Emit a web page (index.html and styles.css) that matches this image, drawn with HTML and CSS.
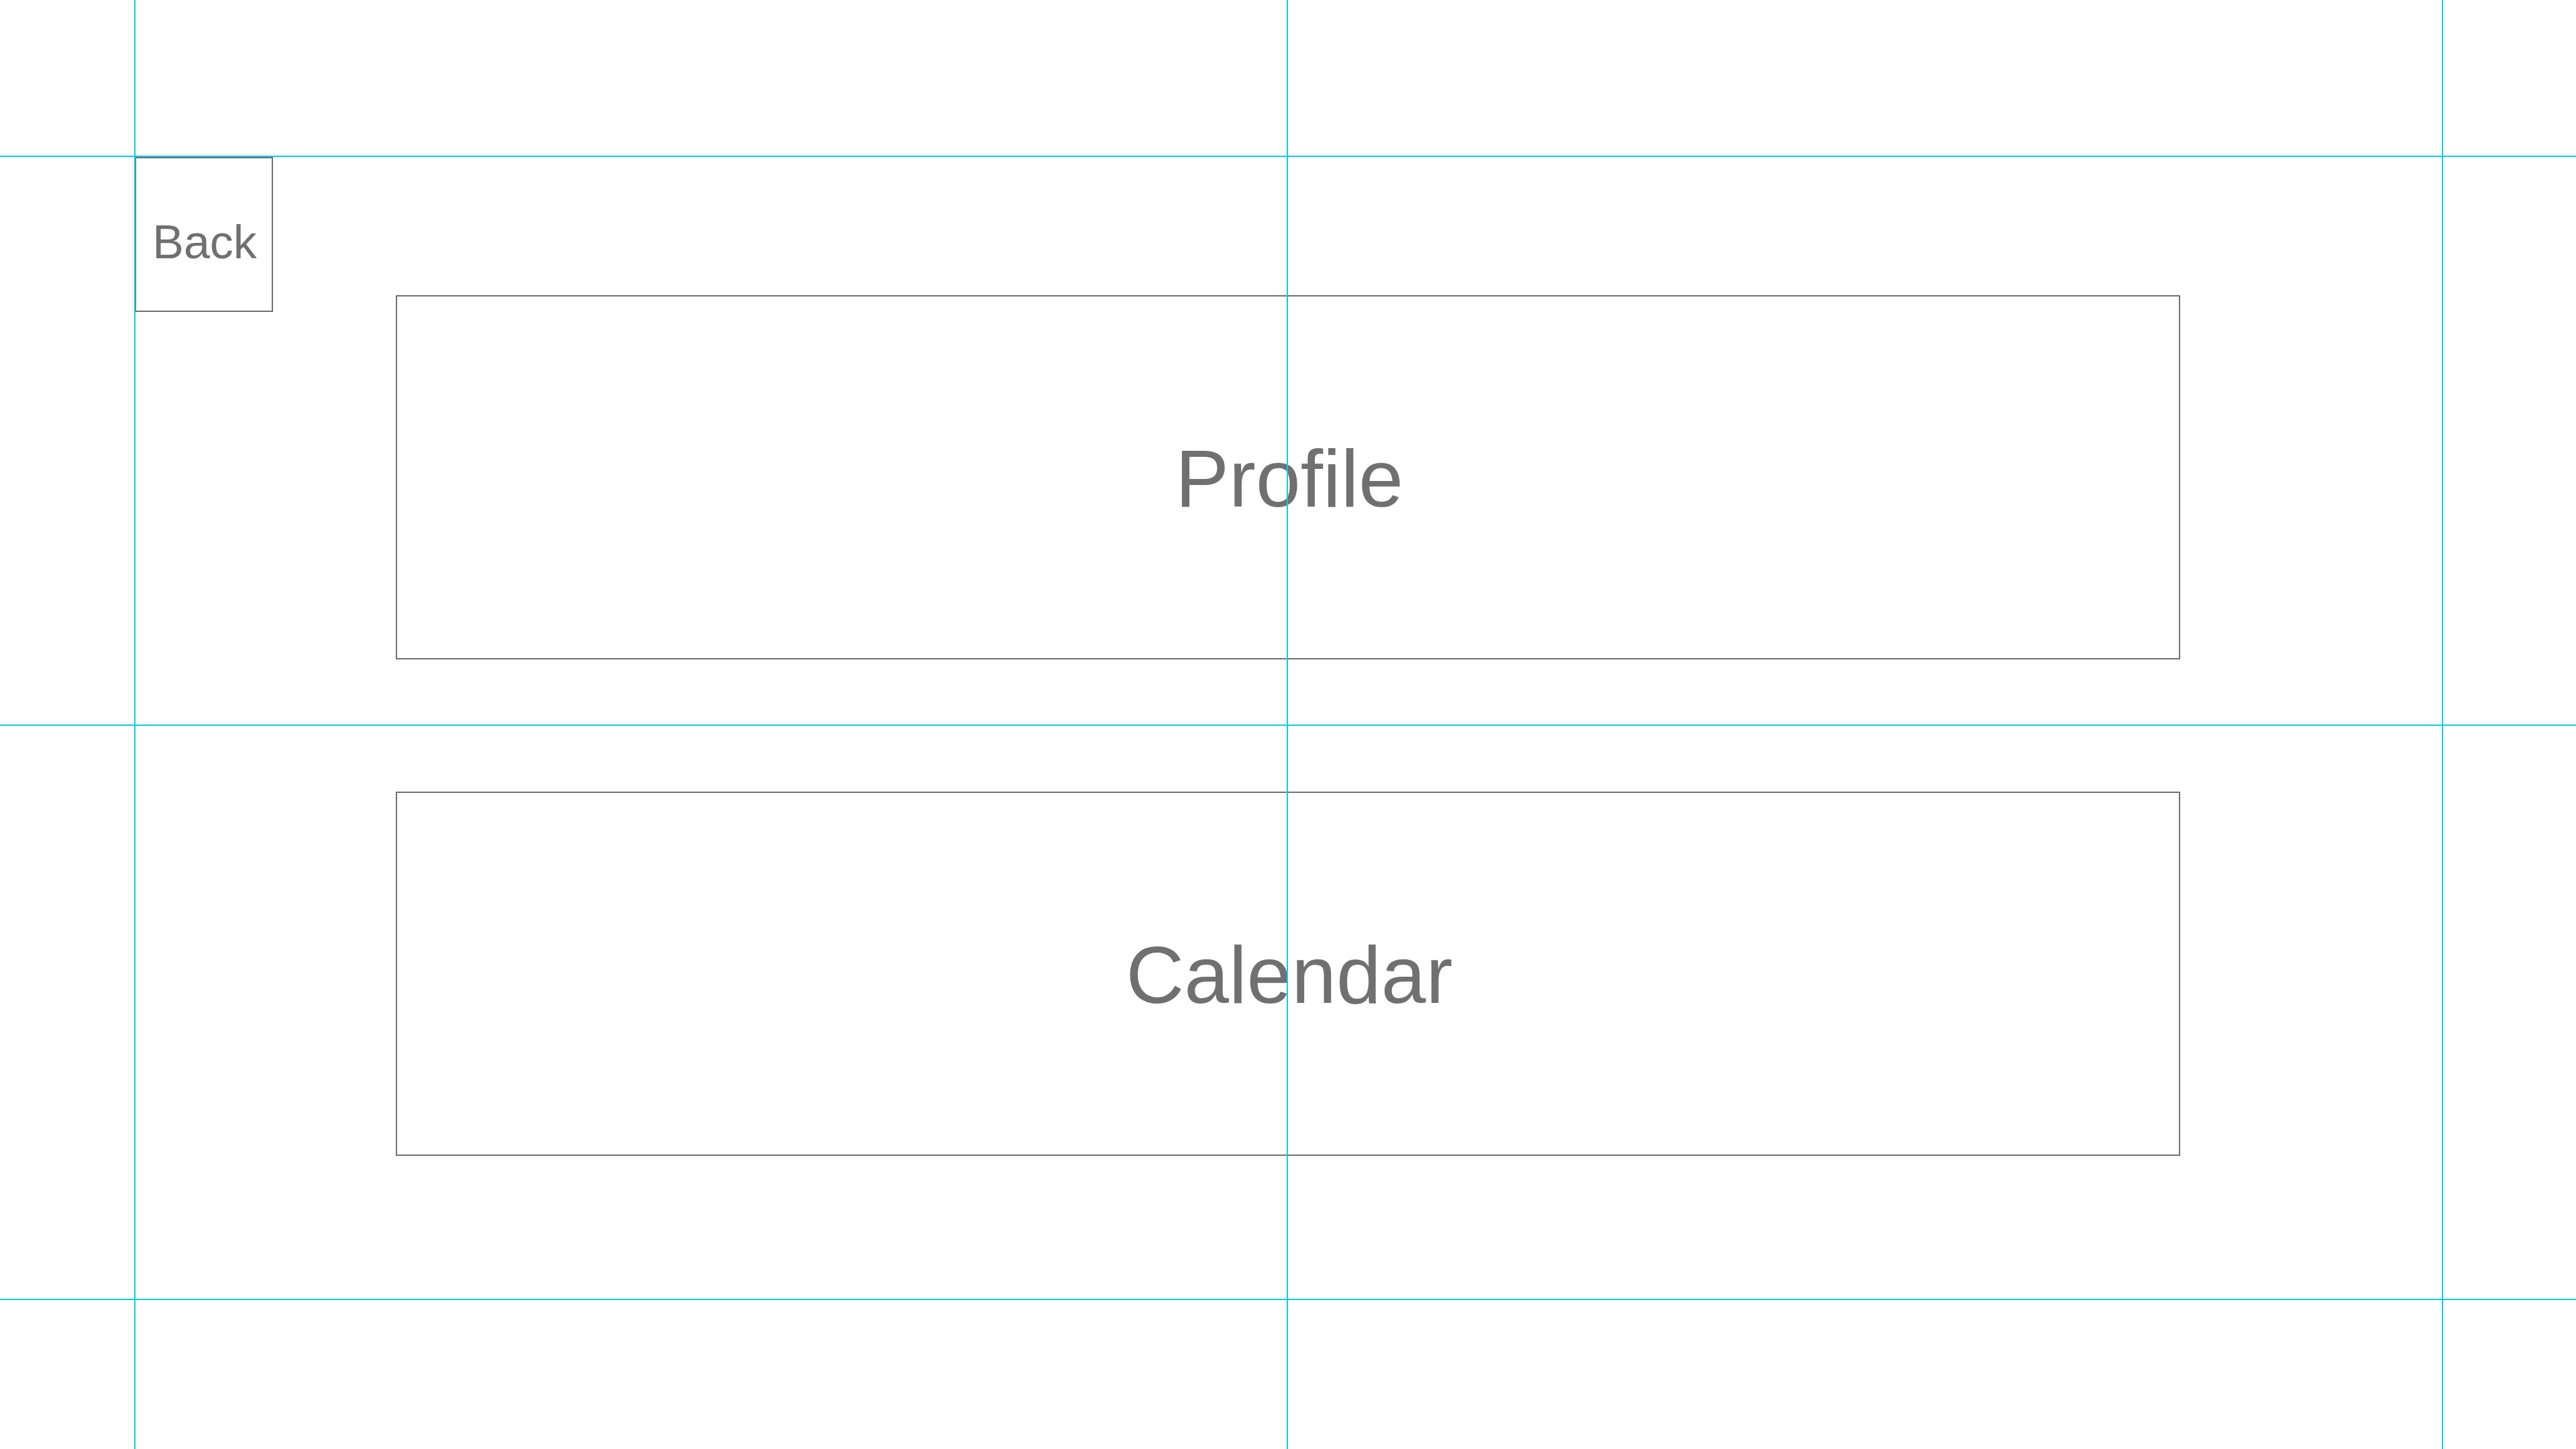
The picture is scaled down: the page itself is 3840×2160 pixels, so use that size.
FILE: index.html
```html
<!DOCTYPE html>
<html lang="en">
<head>
<meta charset="utf-8">
<title>Menu</title>
<link rel="stylesheet" href="styles.css">
</head>
<body>
<div class="page">
  <div class="layout">
    <button class="back">Back</button>
    <button class="card card-profile">Profile</button>
    <button class="card card-calendar">Calendar</button>
  </div>
  <div class="guide guide-v guide-v1"></div>
  <div class="guide guide-v guide-v2"></div>
  <div class="guide guide-v guide-v3"></div>
  <div class="guide guide-h guide-h1"></div>
  <div class="guide guide-h guide-h2"></div>
  <div class="guide guide-h guide-h3"></div>
</div>
</body>
</html>
```

FILE: styles.css
```css
html, body {
  margin: 0;
  padding: 0;
  background: #ffffff;
}

.page {
  position: relative;
  width: 3840px;
  height: 2160px;
  overflow: hidden;
  font-family: "Liberation Sans", Arial, sans-serif;
  color: #707070;
}

.layout {
  padding: 234px 0 0 201px;
  display: grid;
  grid-template-columns: 206px 183px 2660px;
  grid-template-rows: 206px 25px 518px 197px 543px;
}

button {
  font-family: inherit;
  color: inherit;
  background: #ffffff;
  border: 2px solid #707070;
  margin: 0;
  box-sizing: border-box;
  display: flex;
  align-items: center;
  justify-content: center;
  cursor: pointer;
}

.back {
  grid-column: 1;
  grid-row: 1 / 3;
  font-size: 70px;
  padding: 23px 0 0 2px;
}

.card {
  grid-column: 3;
  font-size: 120px;
  padding: 3px 0 0 4px;
}

.card-profile {
  grid-row: 2 / 4;
}

.card-calendar {
  grid-row: 5;
}

.guide {
  position: absolute;
  background: #0ccbef;
  pointer-events: none;
}

.guide-v {
  top: 0;
  bottom: 0;
  width: 2px;
}

.guide-h {
  left: 0;
  right: 0;
  height: 2px;
}

.guide-v1 { left: 200px; }
.guide-v2 { left: 1918px; }
.guide-v3 { left: 3640px; }

.guide-h1 { top: 232px; }
.guide-h2 { top: 1080px; }
.guide-h3 { top: 1936px; }
```
